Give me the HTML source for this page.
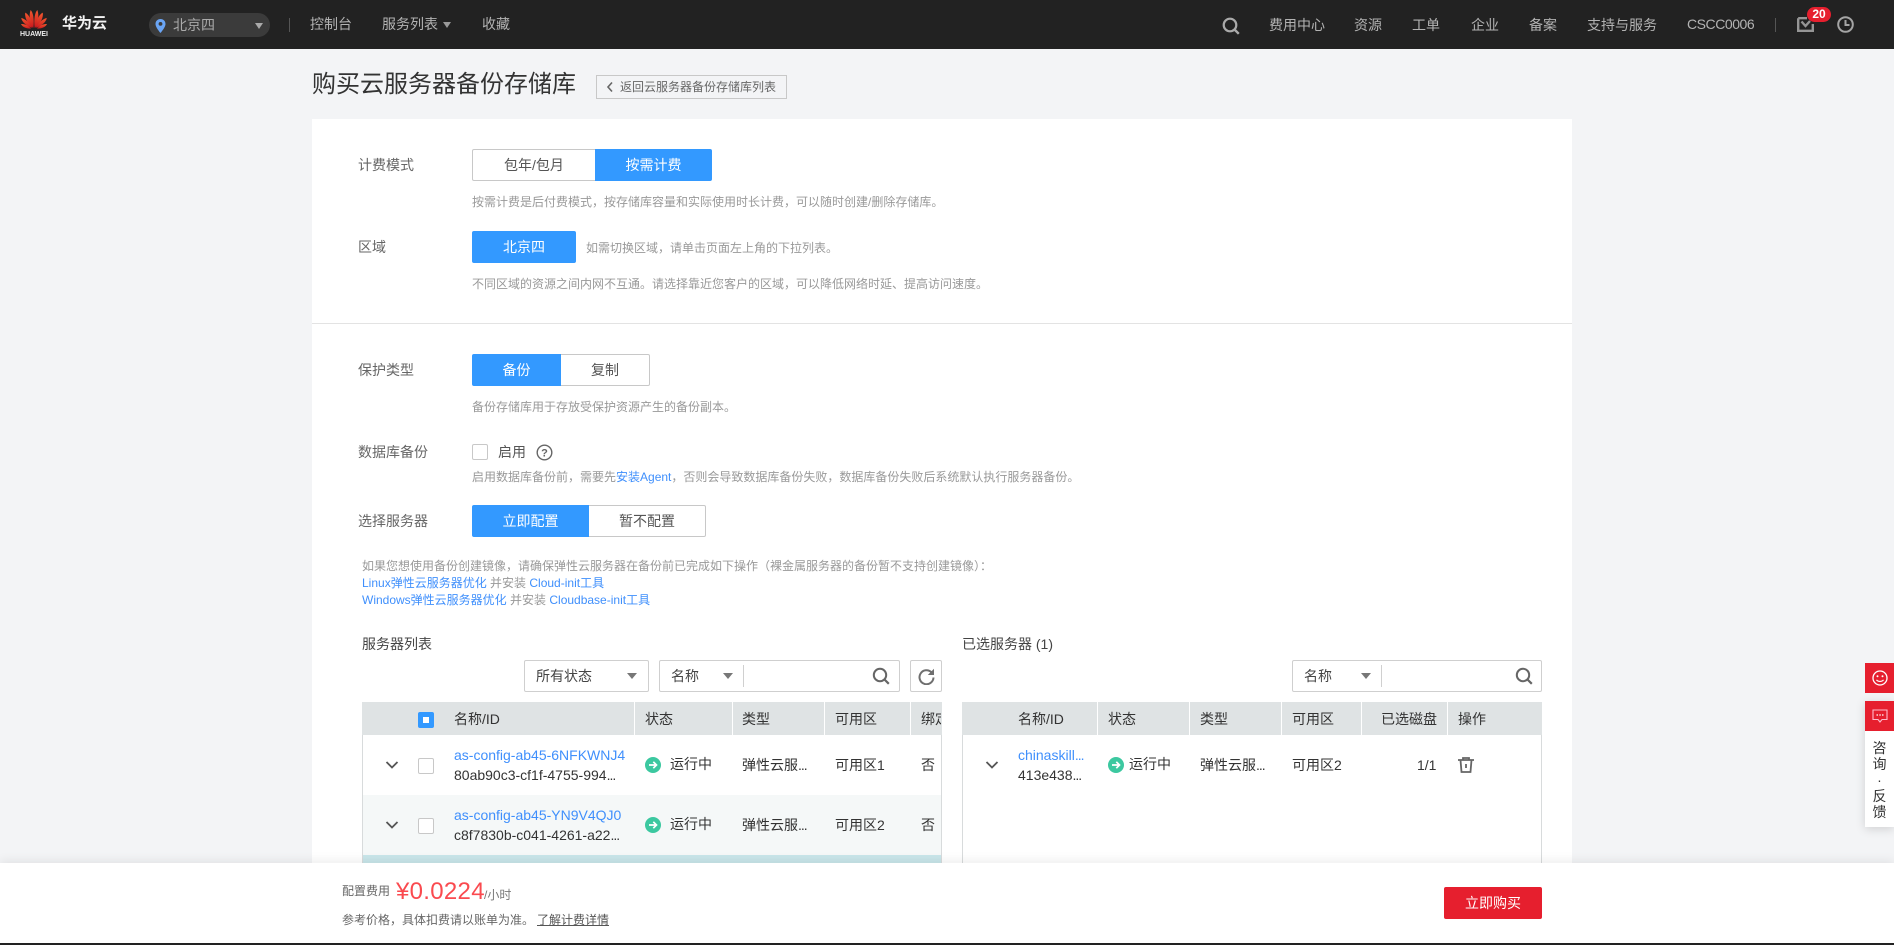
<!DOCTYPE html>
<html lang="zh"><head><meta charset="utf-8"><title>购买云服务器备份存储库</title>
<style>
*{box-sizing:border-box}
html,body{margin:0;padding:0;width:1894px;height:945px;overflow:hidden;background:#f3f4f6;font-family:"Liberation Sans","Noto Sans CJK SC",sans-serif;font-size:14px;color:#333}
.a{position:absolute}
.t{position:absolute;white-space:nowrap;line-height:20px;height:20px}
.n{color:#b3b3b3;font-size:14px}
.l{color:#666;font-size:14px}
.h{color:#999;font-size:12px}
.lk{color:#3f8ffc}
.d{letter-spacing:-1px}
.b{position:absolute;height:32px;line-height:30px;text-align:center;border:1px solid #c8c8c8;background:#fff;color:#555;font-size:14px}
.on{background:#39f;border-color:#39f;color:#fff}
.sel{position:absolute;background:#fff;border:1px solid #cfcfcf;border-radius:2px;height:32px}
.tri{position:absolute;width:0;height:0;border-left:5px solid transparent;border-right:5px solid transparent;border-top:6px solid #777}
.hd{position:absolute;background:#dfe3e4}
.sp{position:absolute;top:702px;width:1px;height:33px;background:#fff}
.ck{position:absolute;width:16px;height:16px;border:1px solid #c8c8c8;border-radius:2px;background:#fff}
svg{position:absolute;display:block}
</style></head><body>

<!-- top bar -->
<div class="a" style="left:0;top:0;width:1894px;height:49px;background:#222"></div>
<svg style="left:20px;top:9px" width="28" height="20" viewBox="0 0 28 20">
<defs><linearGradient id="g" x1="0" y1="0" x2="0" y2="1"><stop offset="0" stop-color="#f0582f"/><stop offset="1" stop-color="#c9161d"/></linearGradient></defs>
<g fill="url(#g)">
<path d="M13.4 19 C10 14 8.6 7 10.6 1 C13 3 14.4 10 13.4 19Z"/>
<path d="M14.6 19 C18 14 19.4 7 17.4 1 C15 3 13.6 10 14.6 19Z"/>
<path d="M12.6 19 C8 15 4.4 9 5.2 3.6 C8.6 5 12.4 12 12.6 19Z"/>
<path d="M15.4 19 C20 15 23.6 9 22.8 3.6 C19.4 5 15.6 12 15.4 19Z"/>
<path d="M11.8 19 C7 17 2 13.4 1.2 9 C5 9.6 10 14 11.8 19Z"/>
<path d="M16.2 19 C21 17 26 13.4 26.8 9 C23 9.6 18 14 16.2 19Z"/>
<path d="M11 19.6 C7 19.8 2.6 18.4 1 15 C4.6 14.6 8.6 16.6 11 19.6Z"/>
<path d="M17 19.6 C21 19.8 25.4 18.4 27 15 C23.4 14.6 19.4 16.6 17 19.6Z"/>
</g></svg>
<div class="t" style="left:20px;top:25px;width:28px;text-align:center;font-size:7px;font-weight:bold;color:#eee">HUAWEI</div>
<div class="t" style="left:62px;top:14px;font-size:15px;font-weight:bold;color:#f2f2f2">华为云</div>
<div class="a" style="left:149px;top:13px;width:121px;height:24px;border-radius:12px;background:#3b3b3b"></div>
<svg style="left:155px;top:19px" width="11" height="14" viewBox="0 0 11 14"><path fill="#6aa5f5" d="M5.5 0C2.5 0 .5 2.2.5 5c0 3.4 5 9 5 9s5-5.6 5-9c0-2.8-2-5-5-5zm0 6.8A1.9 1.9 0 1 1 5.500 3a1.900 1.900 0 0 1 0 3.800z"/></svg>
<div class="t n" style="left:173px;top:15px;color:#aaa;font-size:14px">北京四</div>
<div class="tri" style="left:255px;top:23px;border-left-width:4px;border-right-width:4px;border-top-color:#aaa"></div>
<div class="a" style="left:289px;top:18px;width:1px;height:14px;background:#555"></div>
<div class="t n" style="left:310px;top:14px">控制台</div>
<div class="t n" style="left:382px;top:14px">服务列表</div>
<div class="tri" style="left:443px;top:22px;border-left-width:4.500px;border-right-width:4.500px;border-top-color:#999"></div>
<div class="t n" style="left:482px;top:14px">收藏</div>
<svg style="left:1222px;top:17px" width="18" height="18" viewBox="0 0 18 18"><circle cx="8" cy="8" r="6.300" fill="none" stroke="#aaa" stroke-width="2.200"/><path d="M12.500 12.500L16.800 16.800" stroke="#aaa" stroke-width="2.400"/></svg>
<div class="t n" style="left:1269px;top:15px">费用中心</div>
<div class="t n" style="left:1354px;top:15px">资源</div>
<div class="t n" style="left:1412px;top:15px">工单</div>
<div class="t n" style="left:1471px;top:15px">企业</div>
<div class="t n" style="left:1529px;top:15px">备案</div>
<div class="t n" style="left:1587px;top:15px">支持与服务</div>
<div class="t n" style="left:1687px;top:14px;letter-spacing:-.45px">CSCC0006</div>
<div class="a" style="left:1775px;top:18px;width:1px;height:14px;background:#555"></div>
<svg style="left:1797px;top:17px" width="17" height="15" viewBox="0 0 17 15"><path d="M1.200 1.200H10M1.200 1.200V13.800H15.800V7" fill="none" stroke="#959595" stroke-width="2.400"/><path d="M4.500 4.500L8.500 9L13 4" fill="none" stroke="#959595" stroke-width="2.400"/></svg>
<div class="a" style="left:1807px;top:7px;width:24px;height:15px;border-radius:8px;background:#e61f2e;color:#fff;font-size:12px;font-weight:bold;line-height:15px;text-align:center">20</div>
<svg style="left:1837px;top:16px" width="17" height="17" viewBox="0 0 17 17"><circle cx="8.500" cy="8.500" r="7.300" fill="none" stroke="#a5a5a5" stroke-width="2"/><path d="M8.500 4V9H12.500" fill="none" stroke="#a5a5a5" stroke-width="2"/></svg>

<!-- title -->
<div class="t" style="left:312px;top:70px;font-size:24px;line-height:30px;height:30px;color:#333">购买云服务器备份存储库</div>
<div class="a" style="left:596px;top:75px;width:191px;height:24px;border:1px solid #c8c8c8"></div>
<svg style="left:606px;top:81px" width="8" height="12" viewBox="0 0 8 12"><path d="M6 1.500L2 6L6 10.500" fill="none" stroke="#666" stroke-width="1.600"/></svg>
<div class="t" style="left:620px;top:77px;font-size:12px;color:#666">返回云服务器备份存储库列表</div>

<!-- panel -->
<div class="a" style="left:312px;top:119px;width:1260px;height:826px;background:#fff"></div>
<div class="a" style="left:312px;top:323px;width:1260px;height:1px;background:#e3e3e3"></div>

<div class="t l" style="left:358px;top:155px">计费模式</div>
<div class="b" style="left:472px;top:149px;width:124px;border-radius:2px 0 0 2px">包年/包月</div>
<div class="b on" style="left:595px;top:149px;width:117px;border-radius:0 2px 2px 0">按需计费</div>
<div class="t h" style="left:472px;top:192px">按需计费是后付费模式，按存储库容量和实际使用时长计费，可以随时创建/删除存储库。</div>

<div class="t l" style="left:358px;top:237px">区域</div>
<div class="b on" style="left:472px;top:231px;width:104px;border-radius:2px">北京四</div>
<div class="t h" style="left:586px;top:238px">如需切换区域，请单击页面左上角的下拉列表。</div>
<div class="t h" style="left:472px;top:274px">不同区域的资源之间内网不互通。请选择靠近您客户的区域，可以降低网络时延、提高访问速度。</div>

<div class="t l" style="left:358px;top:360px">保护类型</div>
<div class="b on" style="left:472px;top:354px;width:89px;border-radius:2px 0 0 2px">备份</div>
<div class="b" style="left:561px;top:354px;width:89px;border-left:0;border-radius:0 2px 2px 0">复制</div>
<div class="t h" style="left:472px;top:397px">备份存储库用于存放受保护资源产生的备份副本。</div>

<div class="t l" style="left:358px;top:442px">数据库备份</div>
<div class="ck" style="left:472px;top:444px"></div>
<div class="t" style="left:498px;top:442px;color:#555">启用</div>
<svg style="left:536px;top:444px" width="17" height="17" viewBox="0 0 17 17"><circle cx="8.500" cy="8.500" r="7.300" fill="none" stroke="#666" stroke-width="1.400"/><text x="8.500" y="12.500" text-anchor="middle" font-size="11" font-weight="bold" fill="#666" font-family="Liberation Sans">?</text></svg>
<div class="t h" style="left:472px;top:467px">启用数据库备份前，需要先<span class="lk">安装Agent</span>，否则会导致数据库备份失败，数据库备份失败后系统默认执行服务器备份。</div>

<div class="t l" style="left:358px;top:511px">选择服务器</div>
<div class="b on" style="left:472px;top:505px;width:117px;border-radius:2px 0 0 2px">立即配置</div>
<div class="b" style="left:589px;top:505px;width:117px;border-left:0;border-radius:0 2px 2px 0">暂不配置</div>

<div class="t h" style="left:362px;top:556px">如果您想使用备份创建镜像，请确保弹性云服务器在备份前已完成如下操作（裸金属服务器的备份暂不支持创建镜像）：</div>
<div class="t h" style="left:362px;top:573px"><span class="lk">Linux弹性云服务器优化</span> 并安装 <span class="lk">Cloud-init工具</span></div>
<div class="t h" style="left:362px;top:590px"><span class="lk">Windows弹性云服务器优化</span> 并安装 <span class="lk">Cloudbase-init工具</span></div>

<div class="t" style="left:362px;top:634px;color:#444">服务器列表</div>
<div class="t" style="left:962px;top:634px;color:#444">已选服务器 (1)</div>

<!-- filters left -->
<div class="sel" style="left:524px;top:660px;width:125px"></div>
<div class="t" style="left:536px;top:666px;color:#444">所有状态</div>
<div class="tri" style="left:627px;top:673px"></div>
<div class="sel" style="left:659px;top:660px;width:241px"></div>
<div class="t" style="left:671px;top:666px;color:#444">名称</div>
<div class="tri" style="left:723px;top:673px"></div>
<div class="a" style="left:743px;top:665px;width:1px;height:22px;background:#d0d0d0"></div>
<svg style="left:872px;top:667px" width="18" height="18" viewBox="0 0 18 18"><circle cx="8" cy="8" r="6.200" fill="none" stroke="#666" stroke-width="2"/><path d="M12.500 12.500L16.800 16.800" stroke="#666" stroke-width="2.200"/></svg>
<div class="sel" style="left:910px;top:660px;width:32px"></div>
<svg style="left:918px;top:668px" width="17" height="17" viewBox="0 0 17 17"><path d="M13.500 4.300A7 7 0 1 0 15.500 9.500" fill="none" stroke="#6f6f6f" stroke-width="2"/><path d="M16 0.800V7H9.800Z" fill="#6f6f6f"/></svg>

<!-- filter right -->
<div class="sel" style="left:1292px;top:660px;width:250px"></div>
<div class="t" style="left:1304px;top:666px;color:#444">名称</div>
<div class="tri" style="left:1361px;top:673px"></div>
<div class="a" style="left:1381px;top:665px;width:1px;height:22px;background:#d0d0d0"></div>
<svg style="left:1515px;top:667px" width="18" height="18" viewBox="0 0 18 18"><circle cx="8" cy="8" r="6.200" fill="none" stroke="#666" stroke-width="2"/><path d="M12.500 12.500L16.800 16.800" stroke="#666" stroke-width="2.200"/></svg>

<!-- left table -->
<div class="a" style="left:362px;top:702px;width:580px;height:170px;border:1px solid #d8dbdc;border-bottom:0"></div>
<div class="hd" style="left:362px;top:702px;width:580px;height:33px"></div>
<div class="sp" style="left:634px"></div><div class="sp" style="left:732px"></div><div class="sp" style="left:824px"></div><div class="sp" style="left:910px"></div>
<div class="a" style="left:418px;top:712px;width:16px;height:16px;background:#39f;border-radius:2px"></div>
<div class="a" style="left:423px;top:717px;width:6px;height:6px;background:#fff"></div>
<div class="t" style="left:454px;top:709px">名称/ID</div>
<div class="t" style="left:645px;top:709px">状态</div>
<div class="t" style="left:742px;top:709px">类型</div>
<div class="t" style="left:835px;top:709px">可用区</div>
<div class="a" style="left:921px;top:709px;width:20px;height:20px;overflow:hidden;line-height:20px;white-space:nowrap">绑定</div>

<div class="a" style="left:363px;top:795px;width:578px;height:60px;background:#f5f8f8"></div>
<div class="a" style="left:363px;top:855px;width:578px;height:20px;background:#c9e6ea"></div>

<svg style="left:385px;top:760px" width="14" height="10" viewBox="0 0 14 10"><path d="M1.500 2L7 7.500L12.500 2" fill="none" stroke="#555" stroke-width="1.800"/></svg>
<div class="ck" style="left:418px;top:758px"></div>
<div class="t lk" style="left:454px;top:745px">as-config-ab45-6NFKWNJ4</div>
<div class="t" style="left:454px;top:765px">80ab90c3-cf1f-4755-994<span class="d">...</span></div>
<svg style="left:645px;top:757px" width="16" height="16" viewBox="0 0 16 16"><circle cx="8" cy="8" r="8" fill="#3cc8a0"/><path d="M4 8H11.500M8.300 4.800L11.500 8L8.300 11.200" fill="none" stroke="#fff" stroke-width="1.700"/></svg>
<div class="t" style="left:670px;top:754px">运行中</div>
<div class="t" style="left:742px;top:755px">弹性云服<span class="d">...</span></div>
<div class="t" style="left:835px;top:755px">可用区1</div>
<div class="t" style="left:921px;top:755px">否</div>

<svg style="left:385px;top:820px" width="14" height="10" viewBox="0 0 14 10"><path d="M1.500 2L7 7.500L12.500 2" fill="none" stroke="#555" stroke-width="1.800"/></svg>
<div class="ck" style="left:418px;top:818px"></div>
<div class="t lk" style="left:454px;top:805px">as-config-ab45-YN9V4QJ0</div>
<div class="t" style="left:454px;top:825px">c8f7830b-c041-4261-a22<span class="d">...</span></div>
<svg style="left:645px;top:817px" width="16" height="16" viewBox="0 0 16 16"><circle cx="8" cy="8" r="8" fill="#3cc8a0"/><path d="M4 8H11.500M8.300 4.800L11.500 8L8.300 11.200" fill="none" stroke="#fff" stroke-width="1.700"/></svg>
<div class="t" style="left:670px;top:814px">运行中</div>
<div class="t" style="left:742px;top:815px">弹性云服<span class="d">...</span></div>
<div class="t" style="left:835px;top:815px">可用区2</div>
<div class="t" style="left:921px;top:815px">否</div>

<!-- right table -->
<div class="a" style="left:962px;top:702px;width:580px;height:170px;border:1px solid #d8dbdc;border-bottom:0"></div>
<div class="hd" style="left:962px;top:702px;width:580px;height:33px"></div>
<div class="sp" style="left:1097px"></div><div class="sp" style="left:1189px"></div><div class="sp" style="left:1281px"></div><div class="sp" style="left:1361px"></div><div class="sp" style="left:1447px"></div>
<div class="t" style="left:1018px;top:709px">名称/ID</div>
<div class="t" style="left:1108px;top:709px">状态</div>
<div class="t" style="left:1200px;top:709px">类型</div>
<div class="t" style="left:1292px;top:709px">可用区</div>
<div class="t" style="left:1381px;top:709px">已选磁盘</div>
<div class="t" style="left:1458px;top:709px">操作</div>
<svg style="left:985px;top:760px" width="14" height="10" viewBox="0 0 14 10"><path d="M1.500 2L7 7.500L12.500 2" fill="none" stroke="#555" stroke-width="1.800"/></svg>
<div class="t lk" style="left:1018px;top:745px">chinaskill<span class="d">...</span></div>
<div class="t" style="left:1018px;top:765px">413e438<span class="d">...</span></div>
<svg style="left:1108px;top:757px" width="16" height="16" viewBox="0 0 16 16"><circle cx="8" cy="8" r="8" fill="#3cc8a0"/><path d="M4 8H11.500M8.300 4.800L11.500 8L8.300 11.200" fill="none" stroke="#fff" stroke-width="1.700"/></svg>
<div class="t" style="left:1129px;top:754px">运行中</div>
<div class="t" style="left:1200px;top:755px">弹性云服<span class="d">...</span></div>
<div class="t" style="left:1292px;top:755px">可用区2</div>
<div class="t" style="left:1417px;top:755px;width:19px;text-align:right">1/1</div>
<svg style="left:1458px;top:757px" width="16" height="16" viewBox="0 0 16 16"><path d="M0 3H16M5 3V1H11V3M2.500 3L3.500 15H12.500L13.500 3M8 7V11" fill="none" stroke="#666" stroke-width="1.800"/></svg>

<!-- floating -->
<div class="a" style="left:1865px;top:663px;width:29px;height:30px;background:#e61f2e"></div>
<svg style="left:1872px;top:670px" width="16" height="16" viewBox="0 0 16 16"><circle cx="8" cy="8" r="7" fill="none" stroke="#fff" stroke-width="1.300"/><circle cx="5.500" cy="6.300" r="1" fill="#fff"/><circle cx="10.500" cy="6.300" r="1" fill="#fff"/><path d="M4.500 9.800C6 12 10 12 11.500 9.800" fill="none" stroke="#fff" stroke-width="1.200"/></svg>
<div class="a" style="left:1865px;top:701px;width:29px;height:126px;background:#fff;box-shadow:0 2px 10px rgba(0,0,0,.15)"></div>
<div class="a" style="left:1865px;top:701px;width:29px;height:30px;background:#e61f2e"></div>
<svg style="left:1872px;top:709px" width="16" height="14" viewBox="0 0 16 14"><path d="M1 1H15V10.500H10L8 13L6 10.500H1Z" fill="none" stroke="#fbc" stroke-width="1.100"/><path d="M4.500 6H6M7.300 6H8.800M10 6H11.500" stroke="#fff" stroke-width="1.200"/></svg>
<div class="a" style="left:1865px;top:740px;width:29px;text-align:center;font-size:14px;line-height:16px;color:#333">咨<br>询<br>·<br>反<br>馈</div>

<!-- bottom -->
<div class="a" style="left:0;top:863px;width:1894px;height:80px;background:#fff;box-shadow:0 -2px 10px rgba(0,0,0,.08)"></div>
<div class="a" style="left:0;top:943px;width:1894px;height:2px;background:#222"></div>
<div class="t" style="left:342px;top:881px;font-size:12px;color:#666">配置费用</div>
<div class="t" style="left:396px;top:877px;font-size:24px;line-height:30px;height:30px;color:#fa4a4f;letter-spacing:.3px">¥0.0224</div>
<div class="t" style="left:484px;top:885px;font-size:12px;color:#777">/小时</div>
<div class="t" style="left:342px;top:910px;font-size:12px;color:#666">参考价格，具体扣费请以账单为准。</div>
<div class="t" style="left:537px;top:910px;font-size:12px;color:#555;text-decoration:underline">了解计费详情</div>
<div class="a" style="left:1444px;top:887px;width:98px;height:32px;background:#e61f2e;border-radius:2px;color:#fff;font-size:14px;line-height:32px;text-align:center">立即购买</div>
</body></html>
